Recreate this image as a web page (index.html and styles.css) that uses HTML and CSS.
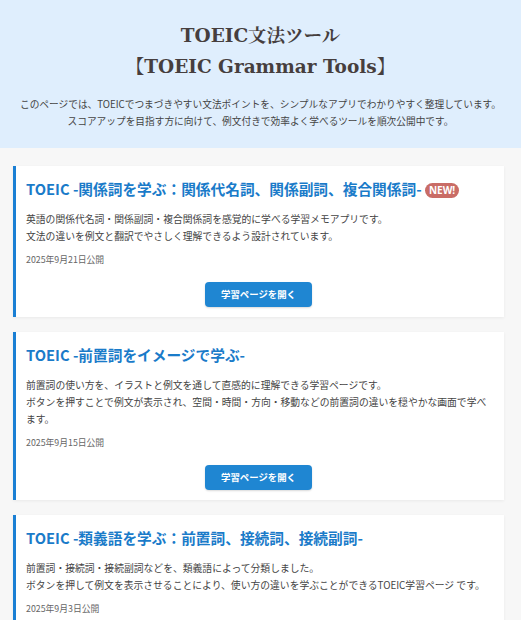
FILE: index.html
```html
<!DOCTYPE html>
<html lang="ja">
<head>
<meta charset="utf-8">
<title>TOEIC文法ツール</title>
<link rel="stylesheet" href="styles.css">
</head>
<body>
<header class="hero">
  <h1 class="hero-title">TOEIC文法ツール<br>【TOEIC Grammar Tools】</h1>
  <p class="hero-lead">このページでは、TOEICでつまづきやすい文法ポイントを、シンプルなアプリでわかりやすく整理しています。<br>スコアアップを目指す方に向けて、例文付きで効率よく学べるツールを順次公開中です。</p>
</header>
<main class="list">
  <article class="card">
    <h2 class="card-title">TOEIC -関係詞を学ぶ：関係代名詞、関係副詞、複合関係詞- <span class="badge">NEW!</span></h2>
    <p class="card-text">英語の関係代名詞・関係副詞・複合関係詞を感覚的に学べる学習メモアプリです。<br>文法の違いを例文と翻訳でやさしく理解できるよう設計されています。</p>
    <p class="card-date">2025年9月21日公開</p>
    <div class="card-actions"><a class="btn" href="#">学習ページを開く</a></div>
  </article>
  <article class="card">
    <h2 class="card-title">TOEIC -前置詞をイメージで学ぶ-</h2>
    <p class="card-text">前置詞の使い方を、イラストと例文を通して直感的に理解できる学習ページです。<br>ボタンを押すことで例文が表示され、空間・時間・方向・移動などの前置詞の違いを穏やかな画面で学べます。</p>
    <p class="card-date">2025年9月15日公開</p>
    <div class="card-actions"><a class="btn" href="#">学習ページを開く</a></div>
  </article>
  <article class="card">
    <h2 class="card-title">TOEIC -類義語を学ぶ：前置詞、接続詞、接続副詞-</h2>
    <p class="card-text">前置詞・接続詞・接続副詞などを、類義語によって分類しました。<br>ボタンを押して例文を表示させることにより、使い方の違いを学ぶことができるTOEIC学習ページ です。</p>
    <p class="card-date">2025年9月3日公開</p>
    <div class="card-actions"><a class="btn" href="#">学習ページを開く</a></div>
  </article>
</main>
</body>
</html>
```
FILE: styles.css
```css
html, body {
  margin: 0;
  padding: 0;
}
body {
  background: #f7f7f7;
  font-family: "Noto Sans CJK JP", "Noto Sans", sans-serif;
  color: #444;
}
.hero {
  background: #dfeefd;
  text-align: center;
  padding: 20px 8px 18px;
}
.hero-title {
  margin: 0;
  font-family: "DejaVu Serif", "Noto Serif CJK JP", "Noto Sans CJK JP", serif;
  font-size: 18.5px;
  line-height: 31px;
  font-weight: bold;
  color: #463e3e;
}
.hero-lead {
  margin: 14px 0 0;
  font-size: 9.7px;
  line-height: 17px;
  color: #444;
}
.list {
  padding: 18px 17px 20px 13px;
  display: flex;
  flex-direction: column;
  gap: 15px;
}
.card {
  background: #fff;
  border-left: 3px solid #1a7fd4;
  box-shadow: 0 1px 3px rgba(0,0,0,0.06);
  padding: 12px 13px 10px 10px;
}
.card-title {
  margin: 0;
  font-size: 14.7px;
  line-height: 22px;
  font-weight: bold;
  color: #1a7bc9;
}
.badge {
  display: inline-block;
  background: #c96c66;
  color: #fff;
  font-size: 10px;
  line-height: 15px;
  padding: 0 4px;
  border-radius: 8px;
  vertical-align: 1px;
  font-family: "Noto Sans", sans-serif;
  font-weight: bold;
}
.card-text {
  margin: 10.5px 0 0;
  font-size: 9.8px;
  line-height: 17px;
  color: #444;
}
.card-date {
  margin: 8.5px 0 0;
  font-size: 8.8px;
  line-height: 14px;
  color: #666;
}
.card-actions {
  display: flex;
  justify-content: center;
  margin-top: 15px;
}
.btn {
  display: inline-block;
  width: 107px;
  height: 25px;
  line-height: 25px;
  text-align: center;
  background: #1f86d2;
  color: #fff;
  text-decoration: none;
  font-size: 9.4px;
  font-weight: bold;
  border-radius: 4px;
  box-shadow: 0 1px 2px rgba(0,0,0,0.15);
}
```
